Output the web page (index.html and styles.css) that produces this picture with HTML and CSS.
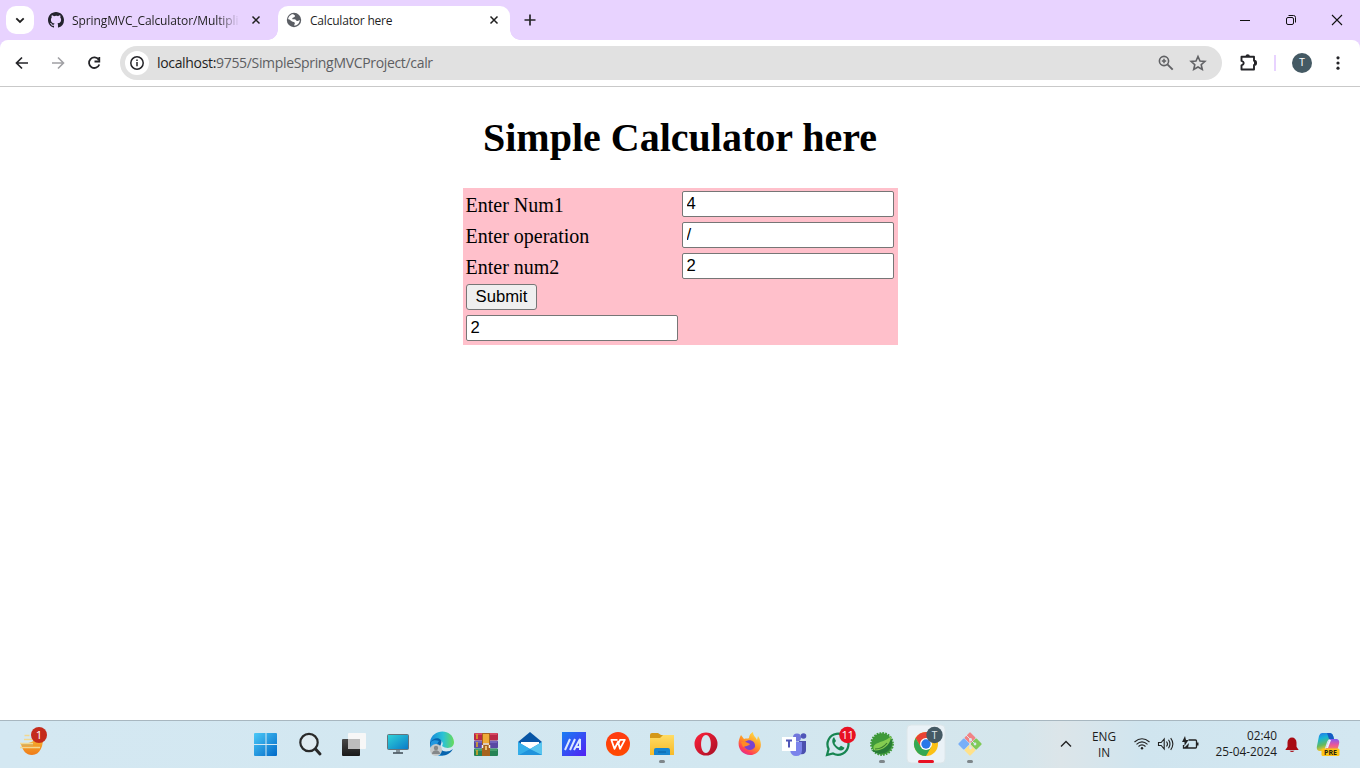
FILE: index.html
```html
<!DOCTYPE html>
<html lang="en">
<head>
<meta charset="utf-8">
<title>Calculator here</title>
<link rel="stylesheet" href="styles.css">
</head>
<body>
<div class="browser-chrome">
<header class="tabstrip">
  <button class="tab-search"><svg width="28" height="28"><path d="M10.300 12.300l3.700 3.700 3.700-3.700" fill="none" stroke="#1f1f1f" stroke-width="1.800"/></svg></button>
  <div class="tab tab-idle">
    <svg class="favicon" width="16" height="16" viewBox="0 0 16 16"><path fill="#24242e" d="M8 0C3.58 0 0 3.58 0 8c0 3.54 2.29 6.53 5.47 7.59.4.07.55-.17.55-.38 0-.19-.01-.82-.01-1.49-2.01.37-2.53-.49-2.69-.94-.09-.23-.48-.94-.82-1.13-.28-.15-.68-.52-.01-.53.63-.01 1.08.58 1.23.82.72 1.21 1.87.87 2.33.66.07-.52.28-.87.51-1.07-1.78-.2-3.64-.89-3.64-3.95 0-.87.31-1.59.82-2.15-.08-.2-.36-1.02.08-2.12 0 0 .67-.21 2.2.82A7.6 7.6 0 0 1 8 3.87c.68 0 1.36.09 2 .26 1.53-1.04 2.2-.82 2.2-.82.44 1.1.16 1.92.08 2.12.51.56.82 1.27.82 2.15 0 3.07-1.87 3.75-3.65 3.95.29.25.54.73.54 1.48 0 1.07-.01 1.93-.01 2.2 0 .21.15.46.55.38A8.01 8.01 0 0 0 16 8c0-4.42-3.58-8-8-8z"/></svg>
    <span class="tab-title fade">SpringMVC_Calculator/Multipli</span>
    <svg class="close" width="16" height="16"><path d="M4.500 4.500l7 7M11.500 4.500l-7 7" stroke="#1f1f1f" stroke-width="1.500"/></svg>
  </div>
  <div class="tab tab-active">
    <svg class="favicon" width="16" height="16" viewBox="0 0 16 16"><circle cx="8" cy="8" r="7.200" fill="#5b5e64"/><path d="M7.200 1.900c.5 1.700 2.300.8 1.800 2.300-.5 1.400-2.400 1-2.700 2.200-.2 1.200 1 .7 2.300.9 1.600.3 1.300 1.700 2.900 1.600 1.100-.1 1.400-.9 2.300-.9-.2 3.200-2.600 5.400-5.500 5.800-.4-1.500 1.200-2.100.3-3.200C7.800 9.700 5.800 9.700 4.700 8.500 3.800 7.600 3 7.400 2.100 7.300 2.300 4.600 4.600 2.200 7.200 1.900z" fill="#fff"/></svg>
    <span class="tab-title current">Calculator here</span>
    <svg class="close" width="16" height="16"><path d="M4.500 4.500l7 7M11.500 4.500l-7 7" stroke="#1f1f1f" stroke-width="1.500"/></svg>
  </div>
  <svg class="new-tab" width="40" height="40"><path d="M14.500 20h11M20 14.500v11" stroke="#252528" stroke-width="1.700"/></svg>
  <div class="window-controls">
    <svg width="46" height="40"><path d="M18 20.500h10" stroke="#111" stroke-width="1"/></svg>
    <svg width="46" height="40" fill="none" stroke="#111"><rect x="18.500" y="17.500" width="7" height="7" rx="1.500"/><path d="M20.500 15.500h5a2 2 0 0 1 2 2v5"/></svg>
    <svg width="46" height="40"><path d="M18 15l10 10M28 15L18 25" stroke="#111" stroke-width="1.100"/></svg>
  </div>
</header>
<nav class="toolbar">
  <svg width="36" height="46"><g fill="none" stroke="#242428" stroke-width="1.700"><path d="M24 23H13M18 17.500L12.500 23l5.500 5.500"/></g></svg>
  <svg width="36" height="46"><g fill="none" stroke="#a0a0a4" stroke-width="1.600"><path d="M12 23h11M18 17.500l5.500 5.500-5.500 5.500"/></g></svg>
  <svg width="36" height="46"><g fill="none" stroke="#242428" stroke-width="1.800"><path d="M22.700 19.700A5.300 5.300 0 1 0 23.300 24.500M23.300 17v4.500H18.500"/></g></svg>
  <div class="omnibox">
    <span class="site-info"><svg width="24" height="24" fill="none" stroke="#242428"><circle cx="12" cy="12" r="6.200" stroke-width="1.500"/><path d="M12 11v4.300M12 8.500v1.500" stroke-width="1.500"/></svg></span>
    <span class="url"><b>localhost:</b>9755/SimpleSpringMVCProject/calr</span>
    <svg width="32" height="34" fill="none" stroke="#606164"><circle cx="14" cy="15" r="4.600" stroke-width="1.600"/><path d="M17.400 18.400l5.300 5.300" stroke-width="1.900"/><path d="M11.800 15h4.400M14 12.800v4.400" stroke-width="1.500"/></svg>
    <svg width="32" height="34" viewBox="0 0 32 34"><path d="M16 10.500l2 4.500 4.900.45-3.700 3.250 1.100 4.800L16 21l-4.300 2.500 1.100-4.800-3.700-3.250L14 15z" fill="none" stroke="#606164" stroke-width="1.600"/></svg>
  </div>
  <svg class="extensions" width="24" height="46"><path d="M5.500 16.700H18v4.100a2.100 2.100 0 0 1 0 4.200v4.500H5.500v-4.200c3-.9 3-3.500 0-4.400z" fill="none" stroke="#242428" stroke-width="1.900" stroke-linejoin="round"/><path d="M9.500 16.500a2.200 2.200 0 0 1 4.400 0zM18 20.700a2.200 2.200 0 0 1 0 4.400z" fill="#242428"/></svg>
  <span class="divider"></span>
  <span class="avatar">T</span>
  <svg class="kebab" width="16" height="46" fill="#242428"><circle cx="8" cy="17.800" r="1.600"/><circle cx="8" cy="23" r="1.600"/><circle cx="8" cy="28.200" r="1.600"/></svg>
</nav>
</div>
<main class="page">
  <h1 class="heading">Simple Calculator here</h1>
  <form class="calculator">
    <label class="label">Enter Num1</label><input class="field" value="4">
    <label class="label">Enter operation</label><input class="field" value="/">
    <label class="label">Enter num2</label><input class="field" value="2">
    <button class="submit" type="button">Submit</button>
    <input class="field result" value="2">
  </form>
</main>
<footer class="taskbar">
  <div class="widgets">
    <svg width="60" height="44"><defs><linearGradient id="sun" x2="0" y2="1"><stop stop-color="#f8c43a"/><stop offset="1" stop-color="#ef7b18"/></linearGradient></defs><path d="M21 22c7 0 15-3 22-10 1 12-3 21-11 21-6 0-9-4-11-11z" fill="url(#sun)"/><path d="M24.500 13.500h5M24 17.500h9M20 21.500h13M20 25.500h20" stroke="#f2d891" stroke-width="1.500"/><path d="M22 23h11" stroke="#c8b779" stroke-width="1"/><circle cx="39" cy="13" r="8" fill="#c42b1c"/><text x="39" y="17" class="badge-text">1</text></svg>
  </div>
  <div class="apps">
    <svg width="44" height="44"><defs><linearGradient id="win" x2="1" y2="1"><stop stop-color="#4cc9f7"/><stop offset="1" stop-color="#0069c8"/></linearGradient></defs><path d="M10 12q0-1 1-1h10.500v11H10zM22.500 11H32q1 0 1 1v10H22.500zM10 23h11.500v11H11q-1 0-1-1zM22.500 23H33v10q0 1-1 1h-9.500z" fill="url(#win)"/></svg>
    <svg width="44" height="44" fill="none" stroke="#292929"><circle cx="21" cy="20.500" r="8.700" fill="#e7edf0" fill-opacity=".6" stroke-width="2.200"/><path d="M27.500 27l4.500 5" stroke-width="3" stroke-linecap="round"/></svg>
    <svg width="44" height="44"><defs><linearGradient id="dark" x2="0" y2="1"><stop stop-color="#484848"/><stop offset="1" stop-color="#191919"/></linearGradient></defs><rect x="10" y="17" width="18" height="17" rx="1" fill="url(#dark)"/><rect x="16" y="11" width="18" height="16" rx="1" fill="#f7f7f7"/><path d="M16 17h12v10H16z" fill="#bcbcbc"/></svg>
    <svg width="44" height="44"><defs><linearGradient id="screen" x2="1" y2="1"><stop stop-color="#30d4d8"/><stop offset="1" stop-color="#0878c8"/></linearGradient></defs><rect x="11.500" y="12.500" width="21" height="15" rx="1" fill="url(#screen)" stroke="#65737b"/><path d="M20 28h4v3h-4z" fill="#87949b"/><path d="M17 31h10" stroke="#4e5b65" stroke-width="1.700"/></svg>
    <svg width="44" height="44"><defs><linearGradient id="edge1"><stop stop-color="#1687d9"/><stop offset=".55" stop-color="#2bc2d5"/><stop offset="1" stop-color="#67db59"/></linearGradient></defs><path d="M10 20C12 6 33 6 34 20c0 7-8 7-12 4 2-3 0-6-4-6s-7 2-8 6z" fill="url(#edge1)"/><path d="M10 21c4-8 14-5 11 1-4 7 6 10 12 5-6 11-23 8-23-6z" fill="#0764ae"/><path d="M11 20c-2 7 3 14 11 14-7-5-6-11-3-15-3-1-6-1-8 1z" fill="#2297df"/><circle cx="16" cy="28" r="6" fill="#c4c8c9"/><circle cx="16" cy="26" r="2.200" fill="#858889"/><path d="M12 32c0-5 8-5 8 0z" fill="#858889"/></svg>
    <svg width="44" height="44"><rect x="10" y="11" width="24" height="7.500" rx="1" fill="#ba2846"/><rect x="10" y="18.800" width="24" height="7.500" rx="1" fill="#5948a3"/><rect x="10" y="26.500" width="24" height="7.500" rx="1" fill="#268355"/><path d="M11 12h22" stroke="#ef657c"/><path d="M11 20h22" stroke="#8b7dd3"/><path d="M11 28h22" stroke="#62ba82"/><path d="M13 12v5M13 20v5M13 28v5" stroke="#e2a823" stroke-width="1.500"/><path d="M18 11h8v23h-8z" fill="#a8631e"/><path d="M19 12h6v9h-6z" fill="#efab36"/><path d="M18.500 26v-3M25.500 26v-3M19 22h6" fill="none" stroke="#eee" stroke-width="1.500"/><path d="M22 24v4" stroke="#e9c071" stroke-width="2"/></svg>
    <svg width="44" height="44"><path d="M10 20L22 10l12 10-12 8z" fill="#0855a5"/><path d="M13 20h18v3l-9 5-9-5z" fill="#fff"/><path d="M10 20l12 7 12-7v13H10z" fill="#2093dc"/><path d="M10 20l12 7-11 6h-1z" fill="#35aee9"/><path d="M34 20v13L22 27z" fill="#58c5ef"/></svg>
    <svg width="44" height="44"><defs><linearGradient id="ma" x2="1" y2="1"><stop stop-color="#187ef3"/><stop offset="1" stop-color="#5320f4"/></linearGradient></defs><path d="M10 10h24v24H10z" fill="url(#ma)"/><path d="M13 28l5-11M18 28l5-11M22 28l6-11v11M24 25h4" fill="none" stroke="#dce9ff" stroke-width="2"/></svg>
    <svg width="44" height="44"><defs><linearGradient id="wps" x2="0" y2="1"><stop stop-color="#ff3b13"/><stop offset="1" stop-color="#ff4a00"/></linearGradient></defs><circle cx="22" cy="22" r="12" fill="url(#wps)"/><path d="M21.500 17.800h-6.200l3.200 9 3.500-7 2 7 4.800-9H24l-1.500 3.500" fill="none" stroke="#fff" stroke-width="1.800" stroke-linejoin="round"/></svg>
    <svg width="44" height="44"><defs><linearGradient id="folder" x2="0" y2="1"><stop stop-color="#ffdc65"/><stop offset="1" stop-color="#f7ba28"/></linearGradient></defs><path d="M10 13q0-2 2-2h6l3 2h13v8H10z" fill="#d49818"/><path d="M10 16h10l3-3h11v20H10z" fill="url(#folder)"/><path d="M14 33v-5q0-2 2-2h12q2 0 2 2v5z" fill="#1785d0"/><path d="M18 30h8" stroke="#0860a4"/><rect x="19" y="38" width="6" height="3" rx="1.500" fill="#7e868a"/></svg>
    <svg width="44" height="44"><defs><linearGradient id="opera" x2="1" y2="1"><stop stop-color="#ff213b"/><stop offset="1" stop-color="#a60f24"/></linearGradient></defs><path fill-rule="evenodd" d="M22 10.500a11.500 11.500 0 1 1 0 23 11.500 11.500 0 1 1 0-23zm0 2.500c-6.500 0-6.500 18 0 18s6.500-18 0-18z" fill="url(#opera)"/></svg>
    <svg width="44" height="44"><defs><linearGradient id="fox" x1=".8" x2=".2" y2="1"><stop stop-color="#ffe34a"/><stop offset=".5" stop-color="#ff9226"/><stop offset=".8" stop-color="#ff3d58"/><stop offset="1" stop-color="#d42ba6"/></linearGradient></defs><path d="M13 13l3 4c2-1 4 0 5-1 0-3 2-5 4-6 0 4 3 5 4 8l1-4c7 11 0 19-8 19-9 0-15-9-9-20z" fill="url(#fox)"/><path d="M17 20c4-4 11-1 10 5-3 5-10 3-11-1l5-2-5-1z" fill="#7943d0"/><path d="M13 20c5-1 6 1 9 2-1 2-5 2-7 3z" fill="#ff8a25"/></svg>
    <svg width="44" height="44"><circle cx="25" cy="15.500" r="4" fill="#7177dc"/><circle cx="31.500" cy="14" r="2.800" fill="#4f55b8"/><path d="M27 19h7v9q0 5-6 4z" fill="#4b50ae"/><path d="M19 20h11v8q0 6-6 6-5 0-6-6z" fill="#7b83eb"/><path d="M10 15h14v14H10z" fill="#fff"/><path d="M14 18.500h6M17 18.500v7" stroke="#4f55b8" stroke-width="2"/></svg>
    <svg width="44" height="44"><path d="M11 33l1.600-6A10.500 10.500 0 1 1 17 31.500z" fill="none" stroke="#178551" stroke-width="2.200"/><path d="M18 15l2 4-1.500 2c1 2 2.500 3.500 4.500 4.500l2-1.800 3.500 2c-1 3-4 3.500-7 1.500-4-3-7.500-8-3.500-12.200z" fill="#178551"/><circle cx="31.500" cy="13" r="8.300" fill="#e81123"/><text x="31.500" y="17.200" class="badge-text tight">11</text></svg>
    <svg width="44" height="44"><circle cx="22" cy="22" r="10.700" fill="#3f9a3a" stroke="#3f9a3a" stroke-width="2.400" stroke-dasharray="1.700 1.100"/><path d="M31 14c2 15-8 19-17 14-3-9 10-6 17-14z" fill="#83cc50"/><path d="M11 28c10 2 18-3 20-12 4 10-5 18-15 15z" fill="#277a36"/><path d="M15 27c5 0 9-2 12-6" fill="none" stroke="#377b30" stroke-width="1.200"/><rect x="19" y="38" width="6" height="3" rx="1.500" fill="#7e868a"/></svg>
    <svg width="44" height="44"><rect x="3" y="3" width="38" height="38" rx="4" fill="#eaf2f7" stroke="#dce6ea"/><circle cx="22" cy="22" r="12" fill="#fbc116"/><path d="M11.600 16a12 12 0 0 1 20.800 0H22l-5.200 9z" fill="#e94235"/><path d="M11.600 16A12 12 0 0 0 22 34l5.200-9H16.800z" fill="#34a853"/><circle cx="22" cy="22" r="6" fill="#fff"/><circle cx="22" cy="22" r="4.700" fill="#2878e8"/><circle cx="30.500" cy="13" r="8.200" fill="#455a64"/><text x="30.500" y="16.500" class="profile-text">T</text><rect x="14" y="38" width="16" height="3" rx="1.500" fill="#e81123"/></svg>
    <svg width="44" height="44"><g transform="rotate(45 22 22)"><rect x="13.500" y="13.500" width="8.300" height="8.300" rx="1" fill="#f18384"/><rect x="22.200" y="13.500" width="8.300" height="8.300" rx="1" fill="#80ca58"/><rect x="13.500" y="22.200" width="8.300" height="8.300" rx="1" fill="#78aff8"/><rect x="22.200" y="22.200" width="8.300" height="8.300" rx="1" fill="#ffe18a"/></g><path d="M18 13l4 4v8M22 17l5 5" fill="none" stroke="#dae7ed" stroke-width="1"/><circle cx="22.500" cy="17.500" r="1.400" fill="#dae7ed"/><circle cx="27" cy="22" r="1.400" fill="#dae7ed"/><circle cx="22.500" cy="26" r="1.400" fill="#dae7ed"/><rect x="19" y="38" width="6" height="3" rx="1.500" fill="#7e868a"/></svg>
  </div>
  <div class="tray">
    <svg width="28" height="44"><path d="M9 24.500l5-5 5 5" fill="none" stroke="#222" stroke-width="1.400"/></svg>
    <div class="language">ENG<br>IN</div>
    <svg width="24" height="44" fill="none" stroke="#222" stroke-width="1.100"><path d="M4.500 20q7.500-6.500 15 0M6.500 22.300q5.500-4.800 11 0M8.500 24.500q3.500-3.200 7 0"/><circle cx="12" cy="26.200" r="1.200" fill="#222" stroke="none"/></svg>
    <svg width="24" height="44" fill="none" stroke="#222" stroke-width="1.100"><path d="M4.500 20.500h2.700l3-3.500v10l-3-3.500H4.500zM12.500 19.500q2 2.500 0 5M14.500 17.800q3 4.200 0 8.400M16.700 16.200q4.300 5.800 0 11.600"/></svg>
    <svg width="24" height="44" fill="none" stroke="#222" stroke-width="1.300"><path d="M10.500 18h7q1 0 1 1v6q0 1-1 1H5.500v-3"/><path d="M19.500 20.500v3" stroke-width="2"/><path d="M7 14l-3 6h2.500v4l4-6H8z" fill="#222" stroke="none"/><path d="M6 26h4l1-5z" fill="#222" stroke="none"/></svg>
    <div class="clock">02:40<br>25-04-2024</div>
    <svg width="30" height="44"><path d="M8.300 28l2.200-3.200V20.500a4.500 5 0 0 1 9 0v4.300l2.200 3.200z" fill="#a80b13"/><path d="M12.500 28.800h5q-2.500 2.500-5 0z" fill="#a80b13"/></svg>
    <svg class="copilot" width="44" height="44"><defs><linearGradient id="pilot-a" x2=".3" y2="1"><stop stop-color="#2870ec"/><stop offset=".35" stop-color="#16b4d6"/><stop offset=".7" stop-color="#65ba5f"/><stop offset="1" stop-color="#ffc528"/></linearGradient><linearGradient id="pilot-b" x2="0" y2="1"><stop stop-color="#825af4"/><stop offset=".5" stop-color="#ed5598"/><stop offset="1" stop-color="#f49b45"/></linearGradient></defs><path d="M16 11h8q3 0 4 6h-4q-2 0-3 3l-3 9h-5q-3-1-2-5l2-10q1-3 3-3z" fill="url(#pilot-a)"/><path d="M21 11h3q3 0 4 6h-5z" fill="#155bc4"/><path d="M25 17h6q3 1 2 5l-2 7H19l3-8q1-4 3-4z" fill="url(#pilot-b)"/><path d="M23 18h2l-3 8h-2z" fill="#e9f5ff"/><rect x="15.500" y="26.500" width="18" height="7.500" rx="1.500" fill="#ffc415"/><text x="24.500" y="33" class="pre-text">PRE</text></svg>
  </div>
</footer>
</body>
</html>
```
FILE: styles.css
```css
* { box-sizing: border-box; }
body { margin: 0; width: 1360px; height: 768px; overflow: hidden; display: flex; flex-direction: column; background: #fff; font-family: "Open Sans", "Noto Sans", sans-serif; }
svg { display: block; flex: none; }
button { padding: 0; }
.browser-chrome { flex: none; background: #e8d3ff; }
.tabstrip { display: flex; height: 40px; padding-left: 6px; }
.tab-search { width: 28px; height: 28px; margin-top: 6px; border: 0; border-radius: 10px; background: #fff; }
.tab { display: flex; align-items: center; font-size: 12px; color: #1f1f1f; }
.tab-idle { width: 244px; padding-left: 14px; height: 40px; }
.favicon { margin-right: 8px; }
.tab-title { width: 168px; overflow: hidden; white-space: nowrap; line-height: 20px; letter-spacing: -.2px; padding-top: 1px; }
.fade { letter-spacing: -.1px; -webkit-mask-image: linear-gradient(90deg, #000 145px, transparent 168px); mask-image: linear-gradient(90deg, #000 145px, transparent 168px); }
.close { margin-left: 8px; }
.tab-active { position: relative; width: 232px; height: 34px; margin-top: 6px; padding: 0 8px 6px; border-radius: 10px 10px 0 0; background: #fff; }
.tab-active::before, .tab-active::after { content: ""; position: absolute; bottom: 0; width: 10px; height: 10px; }
.tab-active::before { left: -10px; background: radial-gradient(circle at 0 0, #e8d3ff 9.5px, #fff 10px); }
.tab-active::after { right: -10px; background: radial-gradient(circle at 100% 0, #e8d3ff 9.5px, #fff 10px); }
.current { width: 176px; }
.window-controls { display: flex; margin-left: auto; }
.toolbar { display: flex; align-items: center; height: 47px; padding-left: 4px; border-bottom: 1px solid #c9c9c9; background: #fff; border-radius: 8px 8px 0 0; }
.omnibox { display: flex; align-items: center; width: 1102px; height: 34px; margin-left: 8px; padding: 0 8px 0 5px; border-radius: 17px; background: #e1e1e1; }
.site-info { width: 24px; height: 24px; border-radius: 50%; background: #fff; }
.url { flex: 1; margin-left: 8px; font-size: 14px; line-height: 20px; color: #5d5e61; letter-spacing: -.33px; }
.url b { font-weight: 400; color: #1f1f1f; }
.extensions { margin-left: 14px; }
.divider { width: 2px; height: 16px; margin-left: 14px; background: #e8d3ff; }
.avatar { width: 20px; height: 20px; margin-left: 16px; border-radius: 50%; background: #455a64; color: #fff; font: 10px/20px Roboto, sans-serif; text-align: center; }
.kebab { margin-left: 18px; }
.page { flex: 1; display: flex; flex-direction: column; align-items: center; font-family: "Liberation Serif", serif; color: #000; }
.heading { margin: 28px 0 27px; font-size: 40px; line-height: 46px; font-weight: 700; }
.calculator { display: grid; grid-template-columns: 212px 212px; grid-template-rows: 26px 26px 26px 26px 26px; column-gap: 4px; row-gap: 5px; width: 435px; height: 157px; padding: 3px; background: #ffc0cb; }
.label { height: 26px; padding-top: 2px; font-size: 20px; line-height: 24px; }
.field { width: 212px; height: 26px; padding: 1px 4px; border: 1px solid #767676; border-radius: 2px; background: #fff; color: #000; font: 16.667px "Liberation Sans", sans-serif; }
.submit { width: 71px; height: 26px; border: 1px solid #767676; border-radius: 3px; background: #efefef; color: #000; font: 16.667px/22px "Liberation Sans", sans-serif; padding: 0 0 1px 1px; }
.result { padding-left: 4px; }
.submit, .result { grid-column: 1; }
.taskbar { display: flex; height: 48px; padding-top: 1px; border-top: 1px solid #a8b7c0; background: linear-gradient(90deg, #d4e8f2, #d2e7f0 55%, #d5e6ec 75%, #dce5e9 78%, #d0e5ef 84%, #d3e7f1); flex: none; }
.widgets { width: 244px; }
.apps { display: flex; }
.tray { display: flex; flex: 1; padding-left: 60px; color: #1c1c1c; }
.language { width: 48px; margin-right: 2px; padding-top: 6px; font-size: 11.8px; line-height: 16px; text-align: center; }
.clock { width: 75px; padding-top: 5px; font-size: 11.8px; line-height: 16px; text-align: right; white-space: nowrap; }
.copilot { margin-left: -1px; }
.badge-text { fill: #fff; font: 11.5px "Open Sans", sans-serif; text-anchor: middle; }
.tight { letter-spacing: -.6px; }
.profile-text { fill: #dce4e8; font: 10px Roboto, sans-serif; text-anchor: middle; }
.pre-text { fill: #29230c; font: 700 7px "Open Sans", sans-serif; text-anchor: middle; }
```
